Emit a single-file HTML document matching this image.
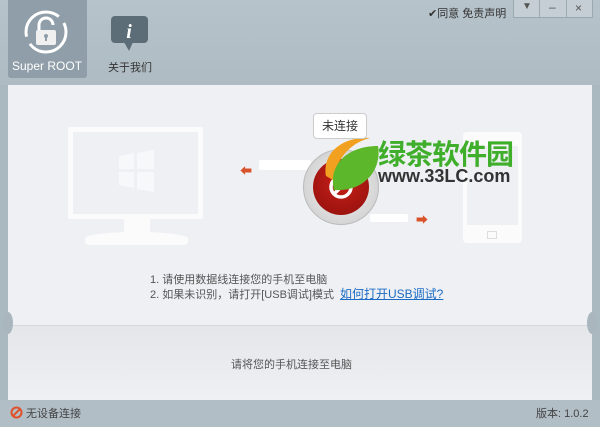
<!DOCTYPE html>
<html><head><meta charset="utf-8"><style>
*{margin:0;padding:0;box-sizing:border-box}
body{width:600px;height:427px;overflow:hidden;background:#aab8c0;font-family:"Liberation Sans","Noto Sans CJK SC",sans-serif;position:relative}
.a{position:absolute}
.t{font-size:11px;color:#555}
</style></head><body>
<div class="a" style="left:0;top:0;width:600px;height:85px;background:linear-gradient(#b6c3ca,#aebbc3)"></div>
<div class="a" style="left:8px;top:0;width:79px;height:78px;background:#8f9ea8;border-radius:0 0 3px 3px"></div>
<svg class="a" style="left:22px;top:8px" width="48" height="48" viewBox="0 0 48 48">
<circle cx="24" cy="24" r="20" fill="none" stroke="#fff" stroke-width="3" stroke-dasharray="50 8"/>
<path d="M17 22v-5a7 7 0 0 1 14 0" fill="none" stroke="#fff" stroke-width="3"/>
<rect x="14" y="22" width="20" height="15" rx="2" fill="#f0f0f0"/>
<circle cx="24" cy="28" r="2" fill="#8f9ea8"/><rect x="23" y="28" width="2" height="5" fill="#8f9ea8"/>
</svg>
<div class="a" style="left:12px;top:59px;font-size:12px;color:#fff">Super ROOT</div>
<svg class="a" style="left:111px;top:16px" width="37" height="36" viewBox="0 0 37 36"><rect x="0" y="0" width="37" height="27" rx="4" fill="#5d6d78"/><path d="M13 26l5 9 4-9z" fill="#5d6d78"/><text x="18" y="22" font-family="Liberation Serif" font-style="italic" font-weight="bold" font-size="20" fill="#fff" text-anchor="middle">i</text></svg>
<div class="a" style="left:108px;top:59px;font-size:11px;color:#333">关于我们</div>
<div class="a t" style="left:428px;top:5px;color:#333;font-size:11px">✔同意 免责声明</div>
<div class="a" style="left:513px;top:0;width:80px;height:18px;background:#c4ced4;border:1px solid #9aa8b0;border-top:0"></div>
<div class="a" style="left:539px;top:0;width:1px;height:18px;background:#9aa8b0"></div>
<div class="a" style="left:566px;top:0;width:1px;height:18px;background:#9aa8b0"></div>
<div class="a" style="left:522px;top:1px;font-size:10px;color:#555">▼</div>
<div class="a" style="left:549px;top:0;font-size:12px;color:#555">–</div>
<div class="a" style="left:575px;top:1px;font-size:12px;color:#555">×</div>
<div class="a" style="left:8px;top:85px;width:584px;height:240px;background:#eef0f4"></div>
<div class="a" style="left:8px;top:325px;width:584px;height:75px;background:linear-gradient(#e4e6ea,#eef0f3);border-top:1px solid #d4d8dc"></div>
<div class="a" style="left:3px;top:312px;width:10px;height:22px;border-radius:50%;background:#a9b6be"></div>
<div class="a" style="left:587px;top:312px;width:10px;height:22px;border-radius:50%;background:#a9b6be"></div>
<!-- monitor -->
<div class="a" style="left:68px;top:127px;width:135px;height:92px;border:5px solid #fbfbfc;border-radius:2px"></div>
<div class="a" style="left:124px;top:219px;width:26px;height:14px;background:#fbfbfc"></div>
<div class="a" style="left:85px;top:232px;width:103px;height:13px;background:#fbfbfc;border-radius:50% 50% 4px 4px"></div>
<svg class="a" style="left:115px;top:150px" width="42" height="42" viewBox="0 0 42 42"><path d="M4 6l15-3v16H4zM22 3l17-3v19H22zM4 22h15v16L4 35zM22 22h17v20l-17-3z" fill="#f7f8fa"/></svg>
<!-- phone -->
<div class="a" style="left:463px;top:132px;width:59px;height:111px;border:4px solid #fbfbfc;border-radius:4px;border-top-width:14px;border-bottom-width:18px"></div>
<div class="a" style="left:487px;top:231px;width:10px;height:8px;border:1px solid #ddd"></div>
<!-- arrows / cables -->
<div class="a" style="left:240px;top:162px;font-size:12px;color:#d9532a">⬅</div>
<div class="a" style="left:259px;top:160px;width:52px;height:10px;background:#fff;border-radius:2px"></div>
<div class="a" style="left:370px;top:214px;width:38px;height:8px;background:#fff;border-radius:2px"></div>
<div class="a" style="left:416px;top:211px;font-size:12px;color:#d9532a">➡</div>
<!-- circle -->
<div class="a" style="left:303px;top:149px;width:76px;height:76px;border-radius:50%;background:radial-gradient(#f4f4f4,#c8c8c8);border:1px solid #bbb"></div>
<div class="a" style="left:313px;top:159px;width:56px;height:56px;border-radius:50%;background:radial-gradient(circle at 50% 40%,#c9201a,#8e0f0b)"></div>
<svg class="a" style="left:327px;top:173px" width="28" height="28" viewBox="0 0 28 28"><circle cx="14" cy="14" r="10" fill="none" stroke="#fff" stroke-width="3.5"/><path d="M7 21L21 7" stroke="#fff" stroke-width="3.5"/></svg>
<!-- leaf logo -->
<svg class="a" style="left:322px;top:134px" width="62" height="64" viewBox="0 0 62 64"><path d="M4 42C0 18 22 2 48 4 32 8 16 20 11 46z" fill="#f2a020"/><path d="M12 56C6 32 24 12 56 12 60 34 44 58 12 56z" fill="#5cb82a"/></svg>
<div class="a" style="left:313px;top:113px;width:54px;height:26px;background:#fff;border:1px solid #ccc;border-radius:4px;font-size:12px;color:#333;text-align:center;line-height:24px">未连接</div>
<div class="a" style="left:378px;top:133px;font-size:28px;font-weight:bold;color:#3fae2a;letter-spacing:-1px;white-space:nowrap">绿茶软件园</div>
<div class="a" style="left:378px;top:166px;font-size:18px;font-weight:bold;color:#333;white-space:nowrap">www.33LC.com</div>
<div class="a t" style="left:150px;top:271px">1. 请使用数据线连接您的手机至电脑</div>
<div class="a t" style="left:150px;top:286px">2. 如果未识别，请打开[USB调试]模式</div>
<div class="a" style="left:340px;top:285px;font-size:12px;color:#1c6bc4;text-decoration:underline">如何打开USB调试?</div>
<div class="a" style="left:231px;top:356px;font-size:11px;color:#555">请将您的手机连接至电脑</div>
<div class="a" style="left:0;top:400px;width:600px;height:27px;background:#b2bec6"></div>
<svg class="a" style="left:10px;top:406px" width="13" height="13" viewBox="0 0 13 13"><circle cx="6.5" cy="6.5" r="5" fill="none" stroke="#e0502a" stroke-width="2"/><path d="M3 10L10 3" stroke="#e0502a" stroke-width="2"/></svg>
<div class="a" style="left:26px;top:405px;font-size:11px;color:#444">无设备连接</div>
<div class="a" style="left:536px;top:405px;font-size:11px;color:#444">版本: 1.0.2</div>
</body></html>
